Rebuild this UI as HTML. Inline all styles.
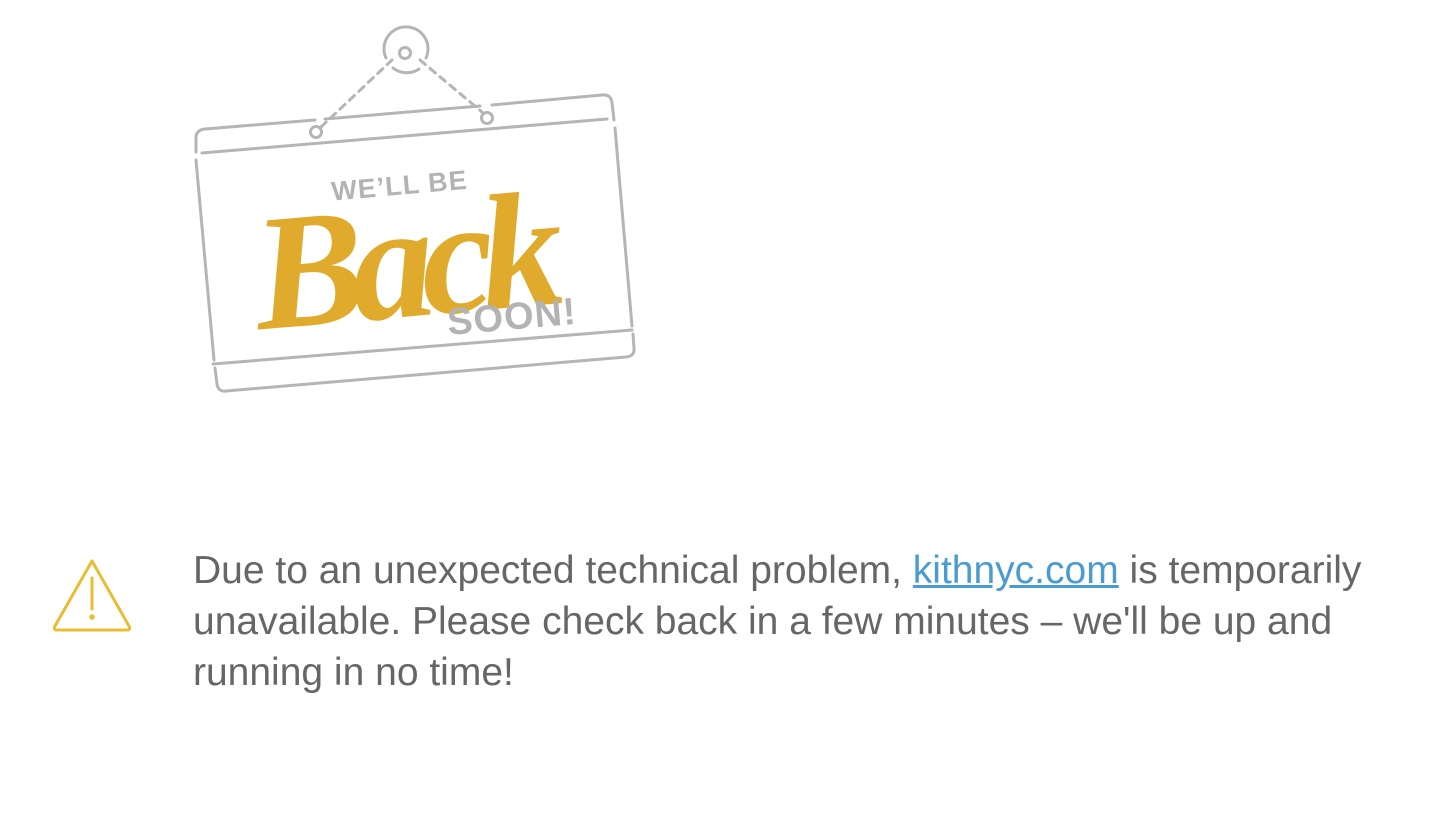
<!DOCTYPE html>
<html><head><meta charset="utf-8"><style>
html,body{margin:0;padding:0;background:#fff;width:1454px;height:822px;overflow:hidden}
.msg{position:absolute;left:193px;top:545px;width:1250px;font-family:"Liberation Sans",Arial,sans-serif;font-size:39px;line-height:51px;color:#666;letter-spacing:0px}
.msg a{color:#4a9bd0;text-decoration:underline}
svg{position:absolute;left:0;top:0}
</style></head><body>
<svg width="1454" height="822" viewBox="0 0 1454 822">
<g fill="none" stroke="#b5b5b5" stroke-width="3" stroke-linecap="round">
 <path d="M196,140 Q195,130 205,129 L315,120 M325,119 L480,106 M492,105 L602,95 Q611,94 612,103 L614,120"/>
 <path d="M615,128 L632,326 M633,334 L634,348 Q635,356 626,357 L226,391 Q218,392 217,384 L215,368 M214,360 L196,160 M196,152 L196,140"/>
 <path d="M202,153 L607,119"/>
 <path d="M213,364 L632,330"/>
 <circle cx="316" cy="132" r="5.5"/>
 <circle cx="487" cy="118" r="5.5"/>
 <circle cx="405" cy="53" r="5.5"/>
 <path d="M386,58 A22,22 0 1 1 426,58" />
 <path d="M393,68 A22,22 0 0 0 419,69" />
 <path d="M321,127 L392,60" stroke-dasharray="7,6"/>
 <path d="M420,60 L482,112" stroke-dasharray="7,6"/>
</g>
<g transform="rotate(-5 410 240)">
 <text x="336" y="194" font-family="Liberation Sans,sans-serif" font-weight="bold" font-size="27" fill="#b3b3b3" letter-spacing="1">WE’LL BE</text>
 <text x="252" y="316" font-family="Liberation Serif,serif" font-style="italic" font-weight="bold" font-size="165" fill="#e0ab2c" letter-spacing="-13">Back</text>
 <text x="440" y="338" font-family="Liberation Sans,sans-serif" font-weight="bold" font-size="38" fill="#b3b3b3" letter-spacing="1">SOON!</text>
</g>
<g fill="none" stroke="#e8bd32" stroke-width="3" stroke-linecap="round" stroke-linejoin="round">
 <path d="M92,561 L55,626 Q53,630 57,630 L127,630 Q131,630 129,626 Z"/>
 <path d="M92,578 L92,609"/>
</g>
<circle cx="92" cy="617" r="2.8" fill="#e8bd32"/>
</svg>
<div class="msg">Due to an unexpected technical problem, <a>kithnyc.com</a> is temporarily<br>unavailable. Please check back in a few minutes – we'll be up and<br>running in no time!</div>
</body></html>
